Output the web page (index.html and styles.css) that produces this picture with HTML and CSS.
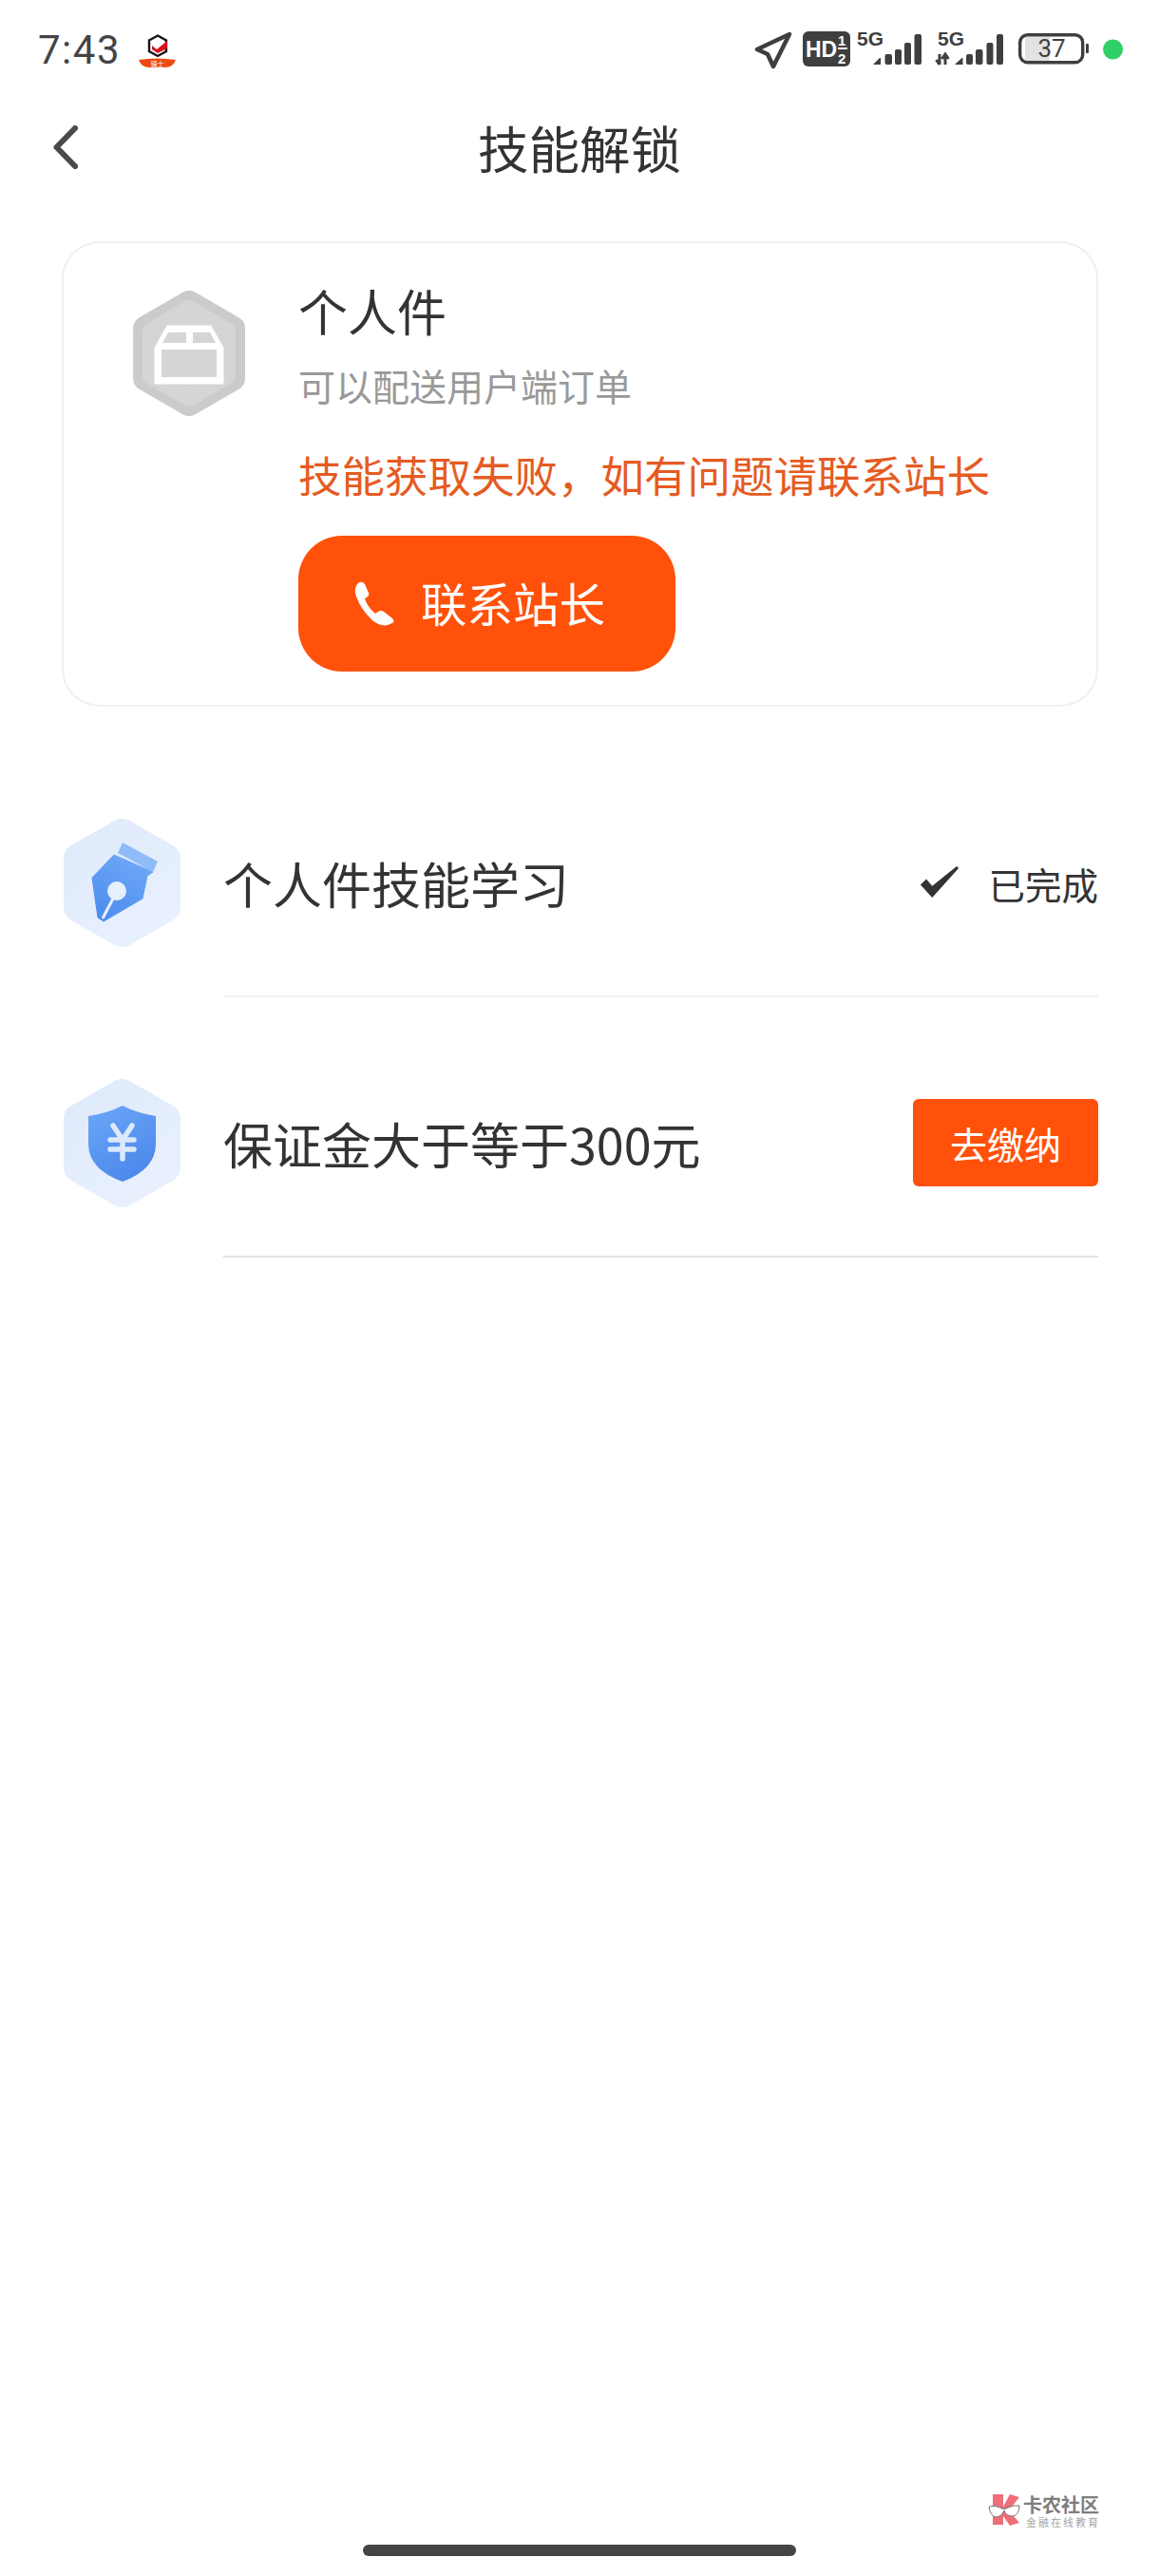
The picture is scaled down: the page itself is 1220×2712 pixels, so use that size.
FILE: index.html
```html
<!DOCTYPE html>
<html lang="zh-CN">
<head>
<meta charset="utf-8">
<title>技能解锁</title>
<link rel="stylesheet" href="styles.css">
</head>
<body>
<div class="page">
  <div class="status">
    <div class="status-left">
      <span class="time">7:43</span>
      <svg class="app-badge" width="40" height="36" viewBox="0 0 40 36">
        <path d="M20 1.500 29 6.500V18L20 23 11 18V6.500Z" fill="#fff" stroke="#1a1116" stroke-width="2.400"/>
        <path d="M14 12 19 16 30 7V15L20 20 14 16Z" fill="#d5121e"/>
        <path d="M0 27Q19 24 39 27Q36 35 28 35H11Q3 35 0 27Z" fill="#ee4a12"/>
        <text class="badge-text" x="19.500" y="33.500" text-anchor="middle">骑士</text>
      </svg>
    </div>
    <div class="status-right">
      <svg class="ic" width="40" height="46" viewBox="0 -6 40 46">
        <path d="M37 3 3 19 14 24 20 37Z" fill="none" stroke="#3f3f3f" stroke-width="4.500" stroke-linejoin="round"/>
      </svg>
      <svg class="ic ml-11" width="50" height="46" viewBox="0 -6 50 46">
        <rect x="0" y="0" width="50" height="37" rx="6" fill="#3f3f3f"/>
        <text class="hd-text" x="3" y="27">HD</text>
        <text class="hd-frac" x="37" y="15">1</text>
        <text class="hd-frac" x="37" y="34">2</text>
        <rect x="37" y="17" width="10" height="2" fill="#fff"/>
      </svg>
      <svg class="ic ml-7" width="68" height="46" viewBox="0 -6 68 46">
        <text class="g-text" x="0" y="15">5G</text>
        <path d="M17 35 24 28H25V35Z" fill="#3f3f3f"/>
        <rect x="29.500" y="24" width="7.500" height="11" rx="2" fill="#3f3f3f"/>
        <rect x="40" y="19" width="7" height="16" rx="2" fill="#3f3f3f"/>
        <rect x="50" y="12" width="7" height="23" rx="2" fill="#3f3f3f"/>
        <rect x="60.500" y="3" width="7.500" height="32" rx="2" fill="#3f3f3f"/>
      </svg>
      <svg class="ic ml-14" width="72" height="46" viewBox="0 -6 72 46">
        <text class="g-text" x="3" y="15">5G</text>
        <path d="M5 24V35M1.500 30 5 35M11 35V24M7.500 29 11 24 14.500 29" fill="none" stroke="#3f3f3f" stroke-width="3"/>
        <path d="M21 35 28.500 28H29.500V35Z" fill="#3f3f3f"/>
        <rect x="33" y="24" width="7" height="11" rx="2" fill="#3f3f3f"/>
        <rect x="43" y="19" width="7.500" height="16" rx="2" fill="#3f3f3f"/>
        <rect x="54.500" y="12" width="7" height="23" rx="2" fill="#3f3f3f"/>
        <rect x="65" y="3" width="7" height="32" rx="2" fill="#3f3f3f"/>
      </svg>
      <svg class="ic ml-16" width="74" height="46" viewBox="0 -6 74 46">
        <rect x="7" y="6" width="26" height="26" fill="#e2e2e2"/>
        <rect x="1.700" y="3.700" width="66" height="29" rx="8" fill="none" stroke="#3f3f3f" stroke-width="3.400"/>
        <rect x="71" y="13" width="3" height="10" rx="1" fill="#3f3f3f"/>
        <text class="batt-text" x="35" y="27" text-anchor="middle">37</text>
      </svg>
      <svg class="ic ml-15" width="21" height="46" viewBox="0 -6 21 46">
        <circle cx="10.500" cy="19" r="10.500" fill="#2fd065"/>
      </svg>
    </div>
  </div>

  <div class="nav">
    <svg class="back" width="26" height="46" viewBox="0 0 26 46">
      <path d="M23 3 3.500 23 23 43" fill="none" stroke="#4a4a4a" stroke-width="6" stroke-linecap="round" stroke-linejoin="round"/>
    </svg>
    <h1 class="title">技能解锁</h1>
    <span></span>
  </div>

  <section class="card">
    <svg class="card-icon" width="118" height="132" viewBox="0 0 118 132">
      <path d="M59 14 104 40V92L59 118 14 92V40Z" fill="#cbcbcb" stroke="#cbcbcb" stroke-width="28" stroke-linejoin="round"/>
      <path d="M59 20 98 43V89L59 112 20 89V43Z" fill="#d5d5d5" stroke="#d5d5d5" stroke-width="20" stroke-linejoin="round"/>
      <path d="M36 37H82L95 60V98H23V60Z" fill="#fff" stroke="#fff" stroke-width="1" stroke-linejoin="round"/>
      <rect x="30" y="62" width="58" height="29" fill="#d5d5d5"/>
      <path d="M37 44H56V55H31Z" fill="#d5d5d5"/>
      <path d="M63 44H81L87 55H63Z" fill="#d5d5d5"/>
    </svg>
    <div class="card-body">
      <div class="card-name">个人件</div>
      <div class="card-sub">可以配送用户端订单</div>
      <div class="card-error">技能获取失败，如有问题请联系站长</div>
      <button class="contact">
        <svg class="phone" width="43" height="47" viewBox="0 0 43 47">
          <path d="M5 2Q9-1 12 3L16 12Q17 15 14 17L12 18Q14 26 23 34L26 32Q29 30 32 32L41 39Q44 42 41 44L36 46Q28 48 20 41 8 30 3 16 0 7 5 2Z" fill="#fff"/>
        </svg>
        <span>联系站长</span>
      </button>
    </div>
  </section>

  <div class="list">
    <div class="row">
      <div class="row-icon">
        <svg width="123" height="135" viewBox="0 0 123 135">
          <defs>
            <linearGradient id="hexA" x1="0" y1="0" x2="0.6" y2="1"><stop offset="0" stop-color="#dfeafb"/><stop offset="1" stop-color="#e8f0fd"/></linearGradient>
            <linearGradient id="nib" x1="0.7" y1="0" x2="0.2" y2="1"><stop offset="0" stop-color="#6ea8f8"/><stop offset="1" stop-color="#4d8cec"/></linearGradient>
          </defs>
          <path d="M61.500 16 107 42V93L61.500 119 16 93V42Z" fill="url(#hexA)" stroke="url(#hexA)" stroke-width="32" stroke-linejoin="round"/>
          <path d="M53 38 94 56 88 60 83 84 42 108 36 104 30 62Z" fill="url(#nib)" stroke="url(#nib)" stroke-width="1" stroke-linejoin="round"/>
          <path d="M62 25 99 45 94 56 57 36Z" fill="#8fbcf8"/>
          <circle cx="56" cy="76" r="10" fill="#e6effd"/>
          <path d="M52 84 41 105" stroke="#e6effd" stroke-width="3"/>
        </svg>
      </div>
      <div class="row-body">
        <span class="row-label">个人件技能学习</span>
        <span class="row-done">
          <svg class="check" width="42" height="33" viewBox="0 0 39 32">
            <path d="M0 19 6 13 12 20 37 0 39 2 12 32Z" fill="#333"/>
          </svg>
          <span>已完成</span>
        </span>
      </div>
    </div>
    <div class="row">
      <div class="row-icon">
        <svg width="123" height="135" viewBox="0 0 123 135">
          <defs>
            <linearGradient id="shield" x1="0.2" y1="0" x2="0.7" y2="1"><stop offset="0" stop-color="#69a5f7"/><stop offset="1" stop-color="#4a87ea"/></linearGradient>
          </defs>
          <path d="M61.500 16 107 42V93L61.500 119 16 93V42Z" fill="url(#hexA)" stroke="url(#hexA)" stroke-width="32" stroke-linejoin="round"/>
          <path d="M62 28Q78 36 97 39V68Q97 95 62 108 26 95 26 68V39Q46 36 62 28Z" fill="url(#shield)"/>
          <path d="M52 49 62 64 72 49M62 64V84M49 64H74M49 74H74" fill="none" stroke="#dbe9fb" stroke-width="5.500" stroke-linecap="round"/>
        </svg>
      </div>
      <div class="row-body row-body-strong">
        <span class="row-label">保证金大于等于300元</span>
        <button class="pay">去缴纳</button>
      </div>
    </div>
  </div>

  <div class="home-bar"></div>

  <div class="watermark">
    <svg width="34" height="36" viewBox="0 0 34 36">
      <path d="M5 1H16V14L23 1 33 4 22 18 33 31 23 34 16 24V33H5Z" fill="#ee6f79"/>
      <path d="M1 14Q7 12 13 15Q17 18 21 15Q27 12 33 13Q33 23 26 24Q19 24 17 18Q14 25 8 25Q2 23 1 14Z" fill="#fff" stroke="#777" stroke-width="1"/>
    </svg>
    <div class="wm-text">
      <span class="wm-title">卡农社区</span>
      <span class="wm-sub">金融在线教育</span>
    </div>
  </div>
</div>
</body>
</html>
```

FILE: styles.css
```css
* {
  box-sizing: border-box;
}

html,
body {
  margin: 0;
  padding: 0;
  background: #fff;
}

body {
  font-family: "Noto Sans CJK SC", "Noto Sans", sans-serif;
  color: #333;
}

.page {
  position: relative;
  width: 1220px;
  height: 2712px;
  overflow: hidden;
  display: flex;
  flex-direction: column;
}

/* status bar */
.status {
  height: 104px;
  padding: 27px 38px 0 40px;
  display: flex;
  justify-content: space-between;
  align-items: flex-start;
}

.status-left {
  display: flex;
  align-items: flex-start;
  padding-top: 6px;
}

.time {
  font-family: Roboto, sans-serif;
  font-size: 42px;
  font-weight: 400;
  line-height: 40px;
  letter-spacing: 1.500px;
  color: #444;
}

.app-badge {
  margin-left: 19px;
  margin-top: 3px;
}

.badge-text {
  font-size: 7px;
  fill: #fff;
}

.status-right {
  display: flex;
  align-items: flex-start;
}

.ic {
  display: block;
}

.ml-7 { margin-left: 7px; }
.ml-11 { margin-left: 11px; }
.ml-14 { margin-left: 14px; }
.ml-15 { margin-left: 15px; }
.ml-16 { margin-left: 16px; }

.hd-text {
  font-family: "Liberation Sans", sans-serif;
  font-size: 23px;
  font-weight: 700;
  fill: #fff;
}

.hd-frac {
  font-family: "Liberation Sans", sans-serif;
  font-size: 15px;
  font-weight: 700;
  fill: #fff;
}

.g-text {
  font-family: "Liberation Sans", sans-serif;
  font-size: 21px;
  font-weight: 700;
  fill: #3f3f3f;
}

.batt-text {
  font-family: Roboto, sans-serif;
  font-size: 26px;
  fill: #3f3f3f;
}

/* nav */
.nav {
  height: 106px;
  padding: 0 56px 4px;
  display: grid;
  grid-template-columns: 1fr auto 1fr;
  align-items: center;
}

.back {
  display: block;
}

.title {
  margin: 0;
  font-size: 53.500px;
  font-weight: 400;
  line-height: 70px;
  color: #333;
}

/* card */
.card {
  margin: 44px 64px 0 65px;
  height: 490px;
  border: 2px solid #f0f0f0;
  border-radius: 40px;
  padding: 41px 0 0 73px;
  display: flex;
  align-items: flex-start;
}

.card-icon {
  flex: none;
  margin-top: 9px;
}

.card-body {
  margin-left: 56px;
}

.card-name {
  font-size: 52px;
  line-height: 60px;
  color: #333;
}

.card-sub {
  margin-top: 23px;
  font-size: 39px;
  line-height: 50px;
  color: #999;
}

.card-error {
  margin-top: 41px;
  font-size: 45.500px;
  line-height: 56px;
  color: #e55b22;
}

.contact {
  margin-top: 37px;
  width: 397px;
  height: 143px;
  border: 0;
  border-radius: 46px;
  background: #ff510a;
  color: #fff;
  font: inherit;
  font-size: 48.500px;
  padding: 0 0 0 58px;
  display: flex;
  align-items: center;
}

.phone {
  flex: none;
}

.contact span {
  margin-left: 28px;
  margin-bottom: 3px;
}

/* list */
.list {
  margin-top: 65px;
  display: flex;
  flex-direction: column;
  gap: 33px;
}

.row {
  padding: 0 64px 0 67px;
  display: flex;
}

.row-icon {
  width: 168px;
  flex: none;
  display: flex;
  align-items: center;
  padding-bottom: 1px;
}

.row-icon svg {
  display: block;
}

.row-body {
  flex: 1;
  height: 241px;
  display: flex;
  align-items: center;
  justify-content: space-between;
  border-bottom: 2px solid #f1f1f1;
}

.row-body-strong {
  border-bottom-color: #e2e2e2;
}

.row-label {
  margin-top: 2px;
  font-size: 52px;
  color: #333;
}

.row-done {
  margin-top: 2px;
  display: flex;
  align-items: center;
  font-size: 38.500px;
  color: #333;
}

.check {
  margin-right: 30px;
  margin-top: -2px;
}

.pay {
  width: 195px;
  height: 92px;
  border: 0;
  border-radius: 6px;
  background: #ff510a;
  color: #fff;
  font: inherit;
  font-size: 39px;
  padding: 0;
}

/* bottom */
.home-bar {
  margin: auto auto 21px;
  width: 456px;
  height: 12px;
  border-radius: 6px;
  background: #444;
}

.watermark {
  position: absolute;
  left: 1040px;
  top: 2625px;
  display: flex;
  gap: 3px;
  align-items: flex-start;
}

.wm-text {
  display: flex;
  flex-direction: column;
  margin-top: 1px;
}

.wm-title {
  font-size: 20px;
  line-height: 22px;
  font-weight: 700;
  color: #7d7d7d;
}

.wm-sub {
  margin-top: 1px;
  font-size: 11px;
  line-height: 12px;
  letter-spacing: 2px;
  margin-left: 3px;
  color: #a5a5a5;
}
```
